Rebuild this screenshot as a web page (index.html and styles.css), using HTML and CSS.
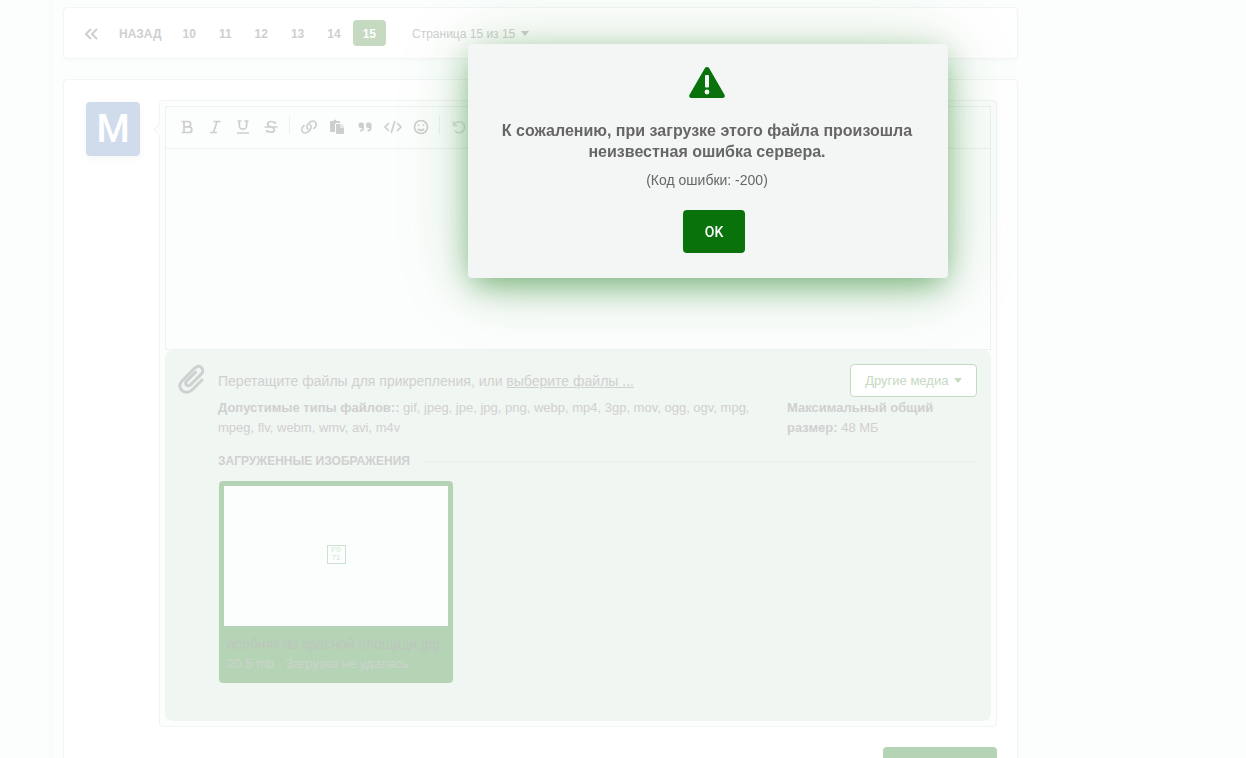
FILE: index.html
```html
<!DOCTYPE html>
<html lang="ru">
<head>
  <meta charset="UTF-8">
  <meta name="viewport" content="width=device-width, initial-scale=1.0">
  <title>Страница 15 из 15</title>
  <link rel="stylesheet" href="styles.css">
</head>
<body>
  <main class="page">
    <nav class="box pagination">
      <a class="page-link first" href="#" aria-label="Первая страница">
        <svg width="13" height="12" viewBox="0 0 13 12"><path d="M6 1 1 6l5 5M12 1 7 6l5 5"/></svg>
      </a>
      <a class="page-link prev" href="#">НАЗАД</a>
      <a class="page-link" href="#">10</a>
      <a class="page-link" href="#">11</a>
      <a class="page-link" href="#">12</a>
      <a class="page-link" href="#">13</a>
      <a class="page-link" href="#">14</a>
      <a class="page-link active" href="#">15</a>
      <a class="page-jump" href="#">Страница 15 из 15 <span class="caret"></span></a>
    </nav>

    <section class="box reply">
      <div class="avatar">M</div>
      <div class="reply-main">
        <div class="composer">
          <div class="editor">
            <div class="toolbar">
              <button class="tool" aria-label="Жирный"><svg viewBox="0 0 16 16"><path d="M2.500 2.500H9a2.600 2.600 0 0 1 0 5.300H5M5 7.800h5a2.800 2.800 0 0 1 0 5.700H2.500M5 2.500v11"/></svg></button>
              <button class="tool" aria-label="Курсив"><svg viewBox="0 0 16 16"><path d="M6.500 2.500h7M3 13.500h7M10 2.500l-3.500 11"/></svg></button>
              <button class="tool" aria-label="Подчёркнутый"><svg viewBox="0 0 16 16"><path d="M2.500 2h4M9.500 2h4M4.300 2v4.500a3.700 3.700 0 0 0 7.400 0V2M2 14h12"/></svg></button>
              <button class="tool" aria-label="Зачёркнутый"><svg viewBox="0 0 16 16"><path d="M1.500 8h13M12 5V2.500M12 4.500C11 2 5 1.600 4.600 4.800 4.500 6.500 6 7.300 8 8c2 .6 3.700 1.300 3.400 3-.5 3-5.900 2.700-7.200.5M4 13.500V11"/></svg></button>
              <span class="divider"></span>
              <button class="tool" aria-label="Ссылка"><svg viewBox="0 0 16 16"><path d="M7.500 10.500C5.500 9.300 5.400 6.700 7 5.100l1.800-1.800c1.700-1.600 4.100-1.600 5.400-.3s1.400 3.700-.2 5.300l-1.600 1.600M8.500 5.500c2 1.200 2.100 3.800.5 5.400l-1.800 1.800c-1.700 1.600-4.100 1.600-5.400.3s-1.400-3.700.2-5.300l1.600-1.600"/></svg></button>
              <button class="tool solid" aria-label="Вставить"><svg viewBox="0 0 16 16"><path d="M2 2h2.500a1.500 1.500 0 0 1 3 0H10a1 1 0 0 1 1 1v1H7.500A1.500 1.500 0 0 0 6 5.500V13H2a1 1 0 0 1-1-1V3a1 1 0 0 1 1-1zM8 5h3.500v3.500H15V14a1 1 0 0 1-1 1H8a1 1 0 0 1-1-1V6a1 1 0 0 1 1-1zM12.500 5 15 7.500h-2.500z"/></svg></button>
              <button class="tool solid" aria-label="Цитата"><svg viewBox="0 0 16 16"><path d="M3.500 3.500h1.500A2 2 0 0 1 7 5.500V9a3.500 3.500 0 0 1-3.500 3.500H3v-1.700h.5A1.500 1.500 0 0 0 5 9H3.500a2 2 0 0 1-2-2V5.500a2 2 0 0 1 2-2zM11 3.500h1.500a2 2 0 0 1 2 2V9a3.500 3.500 0 0 1-3.500 3.500h-.5v-1.700h.5A1.500 1.500 0 0 0 12.500 9H11a2 2 0 0 1-2-2V5.500a2 2 0 0 1 2-2z"/></svg></button>
              <button class="tool code" aria-label="Код"><svg viewBox="0 0 18 16"><path d="M5 4 1 8l4 4M13 4l4 4-4 4M10.800 2 7.200 14"/></svg></button>
              <button class="tool smile" aria-label="Смайлы"><svg viewBox="0 0 16 16"><circle cx="8" cy="8" r="6.500"/><path d="M5 9.800c1.500 2 4.500 2 6 0M5.500 5.500v1.600M10.500 5.500v1.600"/></svg></button>
              <span class="divider"></span>
              <button class="tool faint" aria-label="Отменить"><svg viewBox="0 0 16 16"><path d="M2.500 2.500v4h4M3 6.200a5.500 5.500 0 1 1 .8 5.500"/></svg></button>
            </div>
            <div class="editor-area" role="textbox" contenteditable="true" aria-label="Сообщение"></div>
          </div>

          <div class="uploader">
            <svg class="clip" viewBox="0 0 26 30"><path d="M24 16 14.500 25.500C11 29 6 29 3.500 26S1.500 19.500 4.500 16.500L16.500 4.300C19 1.800 22 1.600 23.700 3.800c1.700 2 1.300 4.600-.7 6.600L12.600 20.800c-1.400 1.400-3.300 1.400-4.300.2s-.8-2.800.5-4.100L17.500 8.200"/></svg>
            <div class="upload-body">
              <div class="upload-head">
                <p class="drop-text">Перетащите файлы для прикрепления, или <a href="#">выберите файлы ...</a></p>
                <button class="media-btn">Другие медиа <span class="caret"></span></button>
              </div>
              <div class="upload-info">
                <p class="types"><b>Допустимые типы файлов::</b> gif, jpeg, jpe, jpg, png, webp, mp4, 3gp, mov, ogg, ogv, mpg, mpeg, flv, webm, wmv, avi, m4v</p>
                <p class="limit"><b>Максимальный общий размер:</b> 48 МБ</p>
              </div>
              <h3 class="upload-title">ЗАГРУЖЕННЫЕ ИЗОБРАЖЕНИЯ</h3>
              <div class="file-card">
                <div class="thumb"><span class="glyph">F0<br>71</span></div>
                <div class="file-meta">
                  <div class="file-name">особняк на красной площади.jpg</div>
                  <div class="file-state">20.5 mb · Загрузка не удалась</div>
                </div>
              </div>
            </div>
          </div>
        </div>
        <button class="submit" aria-label="Отправить"></button>
      </div>
    </section>
  </main>

  <div class="overlay">
    <div class="alert" role="alertdialog" aria-labelledby="alertTitle">
      <svg class="alert-icon" viewBox="0 0 36 32">
        <path d="M15.800 1.300a2.600 2.600 0 0 1 4.400 0l15.300 26.500a2.100 2.100 0 0 1-1.900 3.200H2.400a2.100 2.100 0 0 1-1.900-3.200z" fill="#09720b"/>
        <rect x="16" y="8" width="4" height="12.500" rx="1" fill="#f4f6f5"/>
        <circle cx="18" cy="25" r="2.400" fill="#f4f6f5"/>
      </svg>
      <h2 id="alertTitle">К сожалению, при загрузке этого файла произошла неизвестная ошибка сервера.</h2>
      <p>(Код ошибки: -200)</p>
      <button class="ok">OK</button>
    </div>
  </div>
</body>
</html>
```
FILE: styles.css
```css
*{margin:0;padding:0;box-sizing:border-box}
body{font-family:"Liberation Sans",Arial,sans-serif;font-size:13px;line-height:20px;color:#d0d0d0;background:#fbfefd;overflow:hidden}
button{font:inherit;color:inherit;background:none;border:none;cursor:pointer}
a{color:inherit;text-decoration:none}
svg{display:block;fill:none;stroke:currentColor}

.page{margin-left:53px;padding:7px 228px 0 10px;box-shadow:-3px 0 6px #f7faf9}
.box{background:#fff;border:1px solid #f2f5f4;border-radius:4px;box-shadow:0 2px 3px #f7faf9}

/* pagination */
.pagination{display:flex;align-items:center;gap:1px;height:52px;padding:0 12px;margin-bottom:20px}
.page-link{font-size:12px;font-weight:bold;line-height:24px;padding:2px 11px 0;color:#cfcfcf;border-radius:4px}
.page-link.first{padding:2px 9px 0}
.page-link.first svg{stroke-width:2}
.page-link.prev{padding:2px 9px 0 11px}
.page-link.active{background:#c6d9c1;color:#fff;padding:2px 10px 0}
.page-jump{margin-left:25px;padding-top:2px;font-size:12px}
.caret{display:inline-block;border:4px solid transparent;border-top:5px solid currentColor;border-bottom:0;margin-left:2px;vertical-align:2px}

/* reply form */
.reply{display:flex;gap:19px;padding:20px 20px 20px 22px;min-height:680px}
.avatar{flex:none;width:54px;height:54px;margin-top:2px;border-radius:4px;background:#d0dbec;color:#fff;font-family:Roboto,sans-serif;font-weight:500;font-size:38px;line-height:54px;text-align:center;box-shadow:0 3px 8px #f4f6f6}
.reply-main{flex:1;min-width:0}
.composer{position:relative;padding:5px;border:1px solid #f0f4f2;border-radius:4px;background:#fcfefd}
.composer::before{content:"";position:absolute;left:-5px;top:24px;width:8px;height:8px;background:#fcfefd;border-left:1px solid #f0f4f2;border-bottom:1px solid #f0f4f2;transform:rotate(45deg)}
.editor{border:1px solid #eef1f0}
.toolbar{display:flex;align-items:center;height:42px;padding:0 0 2px 7px;border-bottom:1px solid #eef1f0}
.tool{width:28px;height:28px;padding:6px;color:#cecece}
.tool svg{width:16px;height:16px;stroke-width:1.7}
.tool.solid svg{fill:currentColor;stroke:none}
.tool.code svg{width:18px}
.tool.code{padding:6px 5px}
.tool.faint{color:#dde2de}
.divider{height:18px;border-left:1px solid #eef1f0;margin:0 5px 4px 4px}
.editor-area{height:200px;outline:none}

/* attachments */
.uploader{display:flex;gap:14px;min-height:371px;padding:14px 14px 20px 13px;border-radius:8px;background:#f0f6f2}
.clip{flex:none;width:26px;height:30px;stroke-width:3;stroke-linecap:round;color:#cfd1d0}
.upload-body{flex:1;min-width:0}
.upload-head{display:flex;justify-content:space-between;align-items:center}
.drop-text{font-size:14px}
.drop-text a{text-decoration:underline}
.media-btn{height:33px;padding:0 14px;border:1px solid #c6d9c1;border-radius:4px;background:#fff;color:#c6d9c1}
.upload-info{display:flex;justify-content:space-between;padding-top:1px}
.types{width:545px}
.limit{width:190px;padding-right:20px}
.upload-title{display:flex;align-items:center;gap:12px;margin:13px 0 10px;font-size:12px;line-height:20px}
.upload-title::after{content:"";flex:1;border-top:1px solid #eaf1ec}
.file-card{width:234px;margin-left:1px;padding:5px;border-radius:4px;background:#b5d4b6}
.thumb{display:flex;align-items:center;justify-content:center;height:140px;padding-bottom:4px;background:#fbfefd}
.glyph{width:19px;height:19px;border:1px solid #cbe2ce;font-size:8px;line-height:8px;text-align:center;color:#d0e6d3}
.file-meta{height:52px;padding:8px 3px}
.file-name{font-size:14px;color:#bec5bd;white-space:nowrap}
.file-state{color:#cdd3cc}
.submit{display:block;width:114px;height:38px;margin:20px 0 0 auto;border-radius:4px;background:#b5d4b6}

/* error popup */
.overlay{position:fixed;inset:0;display:flex;justify-content:center;align-items:flex-start;padding:44px 0 0 170px}
.alert{width:480px;padding:23px 31px 25px 29px;border-radius:4px;background:#f4f6f5;color:#666;text-align:center;box-shadow:0 5px 70px rgba(9,114,11,.22),0 10px 30px -5px rgba(9,114,11,.5)}
.alert-icon{width:36px;height:32px;margin:0 auto 21px;stroke:none}
.alert h2{font-size:16px;line-height:21px;margin-bottom:8px}
.alert p{font-size:14px}
.ok{width:62px;height:43px;margin:20px 0 0 14px;border-radius:4px;background:#09720b;color:#fff;font-family:Roboto,sans-serif;font-size:14px;font-weight:500}
```
